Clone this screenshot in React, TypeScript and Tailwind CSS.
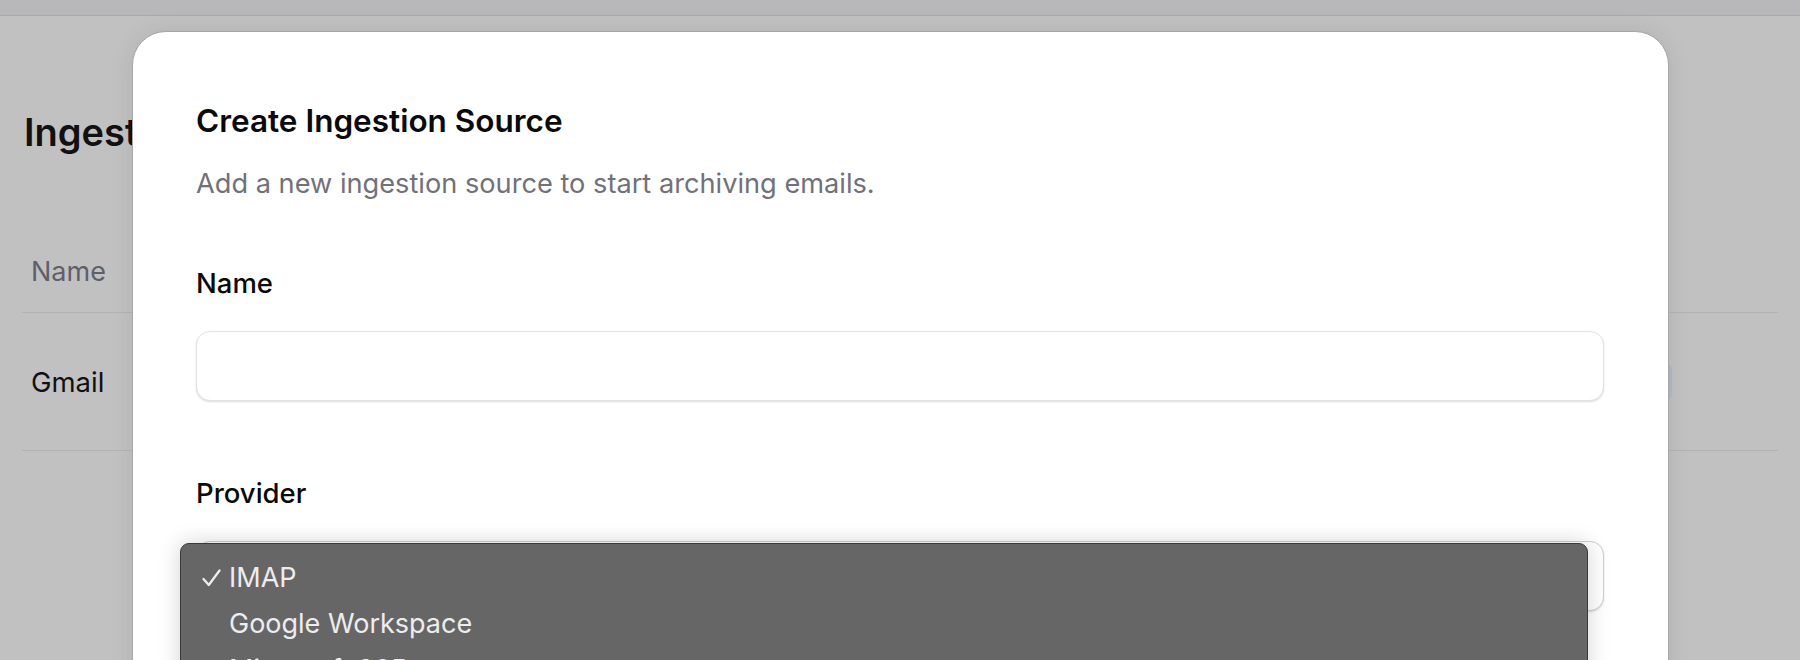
const font = { fontFamily: 'Inter, "Noto Sans", sans-serif' }

type ProviderMenuProps = {
  options: string[],
  selected: string
}

function ProviderMenu(props: ProviderMenuProps) {
  const { options, selected } = props

  return (
    <div className="absolute left-[180px] top-[543px] w-[1408px] h-[160px] bg-[#666666] border border-[#3a3a3a] rounded-[9px] pt-[11px] shadow-[0_0_22px_rgba(0,0,0,0.18)]">
      {options.map((opt) => (
        <div key={opt} className="flex items-center h-[46px] pl-[21px] text-[27px] text-[#ededed]">
          <div className="w-[27px] flex-shrink-0">
            {opt === selected && (
              <svg width="19" height="18" viewBox="0 0 19 18" fill="none">
                <path d="M1.5 10 L6.8 16 L17.5 1.5" stroke="#ededed" strokeWidth="2.3" strokeLinecap="round" strokeLinejoin="round" />
              </svg>
            )}
          </div>
          <span>{opt}</span>
        </div>
      ))}
    </div>
  )
}

function BackgroundPage() {
  return (
    <div className="w-full h-full bg-[#c1c1c1]">
      <div className="h-[16px] bg-[#b8b8ba] border-b border-[#a9a9ab]"></div>
      <div className="px-[22px]">
        <h1 className="mt-[92px] text-[38px] leading-[48px] font-semibold text-[#111111] pl-[2px]">Ingestion Sources</h1>
        <div className="mt-[76px] pl-[9px] pt-[24px] pb-[24px] border-b border-[#b3b3b5] text-[27px] leading-[32px] text-[#5f5f6a]">
          Name
        </div>
        <div className="h-[138px] flex items-center justify-between pl-[9px] pr-[106px] border-b border-[#b3b3b5]">
          <span className="text-[27.5px] leading-[32px] text-[#111111]">Gmail</span>
          <div className="w-[80px] h-[42px] rounded-[10px] bg-[#aeb8cc]"></div>
        </div>
      </div>
    </div>
  )
}

export default function App() {
  return (
    <div className="relative w-[1800px] h-[660px] overflow-hidden" style={font}>
      <BackgroundPage />

      <div className="absolute left-[132px] top-[31px] w-[1537px] h-[720px] bg-white border border-[#a6a6a6] rounded-[34px] shadow-[0_0_24px_rgba(0,0,0,0.08)] pl-[63px] pr-[63px] pt-[70px]">
        <h2 className="text-[31.5px] leading-[38px] font-semibold text-[#0a0a0a]">Create Ingestion Source</h2>
        <p className="mt-[28px] text-[27.2px] leading-[32px] text-[#71717a]">Add a new ingestion source to start archiving emails.</p>

        <div className="mt-[67px] text-[27.5px] leading-[32px] font-medium text-[#0a0a0a]">Name</div>
        <div className="mt-[32px] w-[1408px] h-[70px] rounded-[14px] border border-[#e2e2e4] bg-white shadow-[0_1px_2px_rgba(0,0,0,0.14)]"></div>

        <div className="mt-[76px] text-[27.5px] leading-[32px] font-medium text-[#0a0a0a]">Provider</div>
        <div className="mt-[32px] w-[1408px] h-[70px] rounded-[14px] border border-[#cfcfd2] bg-white shadow-[0_1px_2px_rgba(0,0,0,0.14)]"></div>
      </div>

      <ProviderMenu options={['IMAP', 'Google Workspace', 'Microsoft 365']} selected="IMAP" />
    </div>
  )
}
